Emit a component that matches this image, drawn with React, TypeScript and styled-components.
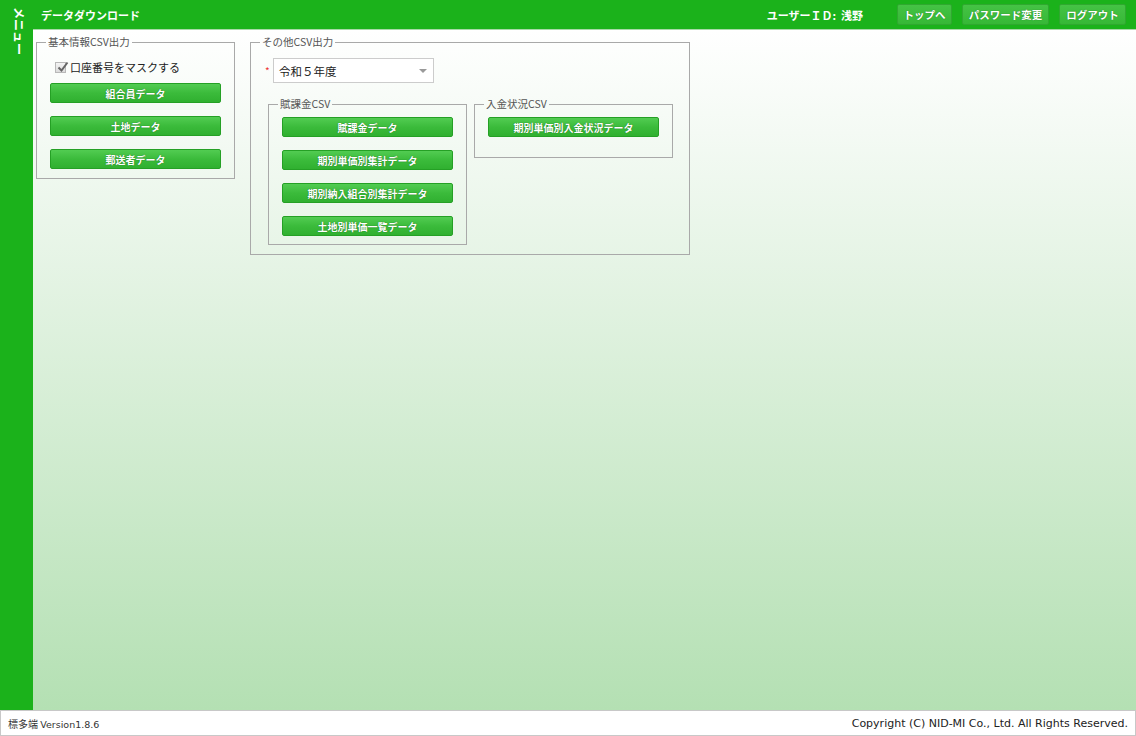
import React from "react";
import styled, { createGlobalStyle } from "styled-components";

const FONT = `"Noto Sans CJK JP", "Noto Sans", "Liberation Sans", sans-serif`;
const LATIN = `"DejaVu Sans", "Noto Sans CJK JP", sans-serif`;

const Global = createGlobalStyle`
  html, body { margin: 0; padding: 0; height: 100%; overflow: hidden; }
  body { font-family: ${FONT}; color: #333; }
  * { box-sizing: border-box; }
`;

const Shell = styled.div`
  display: grid;
  grid-template-columns: 33px 1fr;
  grid-template-rows: 1fr 26px;
  width: 1136px;
  height: 736px;
`;

const SideBar = styled.div`
  background: #1bb21b;
  display: flex;
  justify-content: center;
  padding-top: 7px;
`;

const SideLabel = styled.div`
  writing-mode: vertical-rl;
  text-orientation: sideways;
  color: #fff;
  font-weight: bold;
  font-size: 12px;
  line-height: 12px;
  margin-left: 4px;
`;

const Main = styled.div`
  display: flex;
  flex-direction: column;
  min-width: 0;
`;

const Header = styled.header`
  height: 30px;
  background: #1bb21b;
  border-bottom: 1px solid #a9d9a9;
  display: flex;
  align-items: center;
  padding: 0 10px 0 8px;
  color: #fff;
`;

const Title = styled.h1`
  margin: 0;
  font-size: 11px;
  font-weight: bold;
  flex: 1;
`;

const UserId = styled.span`
  font-size: 11px;
  font-weight: bold;
  margin-right: 24px;
  white-space: nowrap;
`;

const HeadButton = styled.button<{ $w: number }>`
  font-family: ${FONT};
  height: 21px;
  padding: 0;
  margin-left: 10px;
  font-size: 10.5px;
  font-weight: bold;
  white-space: nowrap;
  color: #fff;
  background: linear-gradient(#45c345, #36b836);
  border: 1px solid #30a830;
  border-radius: 2px;
  text-shadow: 0 0 1px rgba(0, 60, 0, 0.6);
  cursor: pointer;
  width: ${(p) => p.$w}px;
`;

const Content = styled.main`
  flex: 1;
  background: linear-gradient(#ffffff 0%, #f4faf4 15%, #b4e0b3 100%);
  display: flex;
  align-items: flex-start;
  gap: 15px;
  padding: 5px 0 0 3px;
`;

const Box = styled.fieldset<{ $w: number }>`
  margin: 0;
  padding: 0;
  width: ${(p) => p.$w}px;
  border: 1px solid #a9a9a9;
  min-width: 0;
`;

const Legend = styled.legend`
  margin-left: 9px;
  padding: 0 2px;
  font-size: 10.5px;
  line-height: 14px;
  color: #555;
`;

const BoxBody = styled.div<{ $pt: number; $pb: number; $px: number }>`
  display: flex;
  flex-direction: column;
  padding: ${(p) => p.$pt}px ${(p) => p.$px}px ${(p) => p.$pb}px;
`;

const ButtonStack = styled.div`
  display: flex;
  flex-direction: column;
  gap: 13px;
`;

const DataButton = styled.button`
  font-family: ${FONT};
  width: 171px;
  height: 20px;
  padding: 0;
  font-size: 10px;
  font-weight: bold;
  white-space: nowrap;
  color: #fff;
  background: linear-gradient(#52cc52, #3bbb3b 50%, #30b030);
  border: 1px solid #25a025;
  border-radius: 2px;
  text-shadow: 0 0 1px rgba(0, 70, 0, 0.8);
  cursor: pointer;
`;

const CheckRow = styled.label`
  display: flex;
  align-items: center;
  gap: 4px;
  font-size: 11px;
  color: #222;
  padding-left: 5px;
  margin-bottom: 8px;
  height: 16px;
`;

const CheckBox = styled.span`
  position: relative;
  width: 11px;
  height: 11px;
  border: 1px solid #b8b8b8;
  background: linear-gradient(#f4f4f4, #dcdcdc);
  display: inline-block;
`;

const CheckMark = styled.svg`
  position: absolute;
  left: 0px;
  top: -3px;
`;

const SelectRow = styled.div`
  display: flex;
  align-items: center;
  margin-bottom: 14px;
`;

const Required = styled.span`
  color: #e33;
  font-size: 10px;
  width: 8px;
`;

const Select = styled.div`
  width: 161px;
  height: 25px;
  border: 1px solid #ccc;
  background: #fff;
  display: flex;
  align-items: center;
  justify-content: space-between;
  padding: 0 6px 0 5px;
  font-size: 11.5px;
  color: #222;
`;

const Arrow = styled.span`
  width: 0;
  height: 0;
  border-left: 4px solid transparent;
  border-right: 4px solid transparent;
  border-top: 4px solid #999;
`;

const SubRow = styled.div`
  display: flex;
  align-items: flex-start;
  gap: 7px;
  padding-left: 3px;
`;

const Footer = styled.footer`
  grid-column: 1 / 3;
  background: #fff;
  border: 1px solid #c8c8c8;
  display: flex;
  align-items: center;
  justify-content: space-between;
  padding: 0 7px 0 7px;
`;

const Version = styled.span`
  font-size: 10px;
  color: #333;
  span { font-family: ${LATIN}; font-size: 9.5px; }
`;

const Copyright = styled.span`
  font-family: ${LATIN};
  font-size: 11px;
  color: #222;
`;

export default function App() {
  return (
    <>
      <Global />
      <Shell>
        <SideBar>
          <SideLabel>メニュー</SideLabel>
        </SideBar>
        <Main>
          <Header>
            <Title>データダウンロード</Title>
            <UserId>ユーザーＩＤ:&nbsp; 浅野</UserId>
            <HeadButton $w={55}>トップへ</HeadButton>
            <HeadButton $w={87}>パスワード変更</HeadButton>
            <HeadButton $w={67}>ログアウト</HeadButton>
          </Header>
          <Content>
            <Box $w={199}>
              <Legend>基本情報CSV出力</Legend>
              <BoxBody $pt={10} $pb={9} $px={13}>
                <CheckRow>
                  <CheckBox>
                    <CheckMark width="14" height="14" viewBox="0 0 14 14">
                      <path d="M2.5 7.5 L5.5 10.5 L11.5 2.5" fill="none" stroke="#666" strokeWidth="2" />
                    </CheckMark>
                  </CheckBox>
                  口座番号をマスクする
                </CheckRow>
                <ButtonStack>
                  <DataButton>組合員データ</DataButton>
                  <DataButton>土地データ</DataButton>
                  <DataButton>郵送者データ</DataButton>
                </ButtonStack>
              </BoxBody>
            </Box>
            <Box $w={440}>
              <Legend>その他CSV出力</Legend>
              <BoxBody $pt={9} $pb={9} $px={14}>
                <SelectRow>
                  <Required>*</Required>
                  <Select>
                    <span>令和５年度</span>
                    <Arrow />
                  </Select>
                </SelectRow>
                <SubRow>
                  <Box $w={199}>
                    <Legend>賦課金CSV</Legend>
                    <BoxBody $pt={6} $pb={8} $px={13}>
                      <ButtonStack>
                        <DataButton>賦課金データ</DataButton>
                        <DataButton>期別単価別集計データ</DataButton>
                        <DataButton>期別納入組合別集計データ</DataButton>
                        <DataButton>土地別単価一覧データ</DataButton>
                      </ButtonStack>
                    </BoxBody>
                  </Box>
                  <Box $w={199}>
                    <Legend>入金状況CSV</Legend>
                    <BoxBody $pt={6} $pb={20} $px={13}>
                      <ButtonStack>
                        <DataButton>期別単価別入金状況データ</DataButton>
                      </ButtonStack>
                    </BoxBody>
                  </Box>
                </SubRow>
              </BoxBody>
            </Box>
          </Content>
        </Main>
        <Footer>
          <Version>
            標多端 <span>Version1.8.6</span>
          </Version>
          <Copyright>Copyright (C) NID-MI Co., Ltd. All Rights Reserved.</Copyright>
        </Footer>
      </Shell>
    </>
  );
}
